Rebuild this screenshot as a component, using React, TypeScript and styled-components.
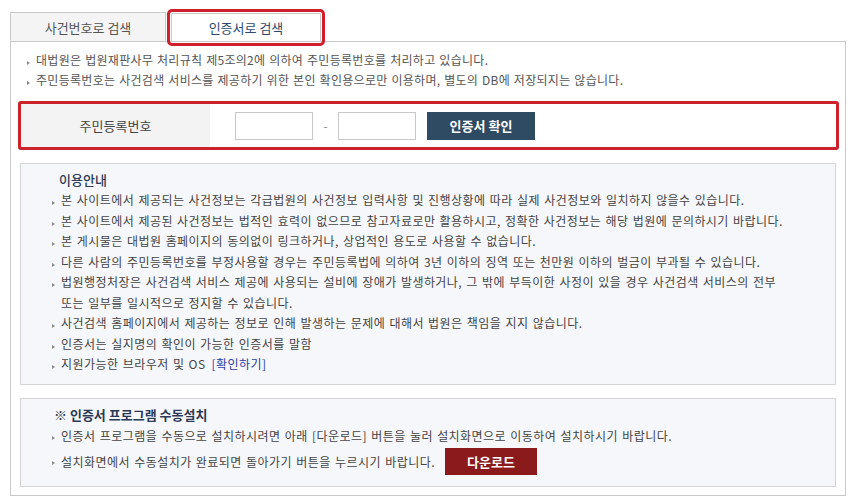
import React from "react";
import styled, { createGlobalStyle } from "styled-components";

const Global = createGlobalStyle`
  html, body { margin: 0; padding: 0; background: #fff; }
  body {
    font-family: "Noto Sans CJK KR", "Noto Sans", sans-serif;
    color: #444;
    font-size: 12px;
  }
  * { box-sizing: border-box; }
`;

const Page = styled.div`
  width: 846px;
  padding: 12px 0 0 10px;
`;

const TabBar = styled.div`
  display: flex;
  align-items: flex-end;
  height: 29px;
`;

const Tab = styled.div<{ $active?: boolean }>`
  position: relative;
  z-index: ${(p) => (p.$active ? 2 : 1)};
  width: ${(p) => (p.$active ? 150 : 156)}px;
  height: 29px;
  margin-left: ${(p) => (p.$active ? 5 : 0)}px;
  margin-bottom: ${(p) => (p.$active ? -1 : 0)}px;
  display: flex;
  align-items: center;
  justify-content: center;
  border: 1px solid #c9c9c9;
  border-bottom: ${(p) => (p.$active ? "1px solid #c9c9c9" : "none")};
  background: ${(p) => (p.$active ? "#fff" : "#f4f4f4")};
  color: ${(p) => (p.$active ? "#2d4a6e" : "#555")};
  font-size: 13px;
  outline: ${(p) => (p.$active ? "3px solid #cf1f2a" : "none")};
  outline-offset: 1px;
  border-radius: 1px;
`;

const Panel = styled.div`
  border: 1px solid #c9c9c9;
  padding: 8px 6px 8px 7px;
`;

const TopList = styled.ul`
  list-style: none;
  margin: 0;
  padding: 0 0 0 9px;
  color: #555;
  line-height: 20px;
  letter-spacing: 0.3px;
  word-spacing: 0.8px;
`;

const Item = styled.li<{ $hang?: boolean }>`
  display: flex;
  align-items: flex-start;
  margin-left: ${(p) => (p.$hang ? -7 : 0)}px;
`;

const Bullet = styled.span`
  flex: none;
  width: 0;
  height: 0;
  margin-top: 11px;
  margin-right: 6px;
  border-left: 3px solid #8a8a8a;
  border-top: 2.5px solid transparent;
  border-bottom: 2.5px solid transparent;
`;

const RedBox = styled.div`
  margin-top: 11px;
  border: 3px solid #cc222b;
  border-radius: 3px;
  height: 49px;
  display: flex;
`;

const Label = styled.div`
  width: 189px;
  background: #f3f3f3;
  display: flex;
  align-items: center;
  justify-content: center;
  font-size: 13px;
  color: #444;
`;

const InputRow = styled.div`
  display: flex;
  align-items: center;
  padding-left: 25px;
`;

const Field = styled.input`
  width: 78px;
  height: 28px;
  border: 1px solid #c8c8c8;
  background: #fff;
  padding: 0 4px;
  font: inherit;
`;

const Dash = styled.span`
  width: 25px;
  text-align: center;
  color: #888;
  font-size: 12px;
`;

const Button = styled.button<{ $tone: "navy" | "red" }>`
  flex: none;
  height: ${(p) => (p.$tone === "navy" ? 28 : 27)}px;
  width: ${(p) => (p.$tone === "navy" ? 108 : 92)}px;
  margin-left: ${(p) => (p.$tone === "navy" ? 11 : 10)}px;
  border: none;
  background: ${(p) => (p.$tone === "navy" ? "#2f4a63" : "#8b1a1c")};
  color: #fff;
  font-family: inherit;
  font-size: 13px;
  font-weight: 700;
  letter-spacing: 0;
  word-spacing: 0;
  padding: 0;
`;

const InfoBox = styled.div<{ $top: number }>`
  margin: ${(p) => p.$top}px 3px 0 2px;
  border: 1px solid #d4d4d4;
  background: #f6f7fa;
  padding: 6px 10px 9px 38px;
`;

const InfoTitle = styled.div<{ $bold?: boolean }>`
  font-size: 13px;
  line-height: 20px;
  color: #2b3a55;
  font-weight: ${(p) => (p.$bold ? 700 : 500)};
  margin-left: ${(p) => (p.$bold ? -5 : 0)}px;
`;

const InfoList = styled.ul<{ $lh: number }>`
  list-style: none;
  margin: 0;
  padding: 0;
  line-height: ${(p) => p.$lh}px;
  color: #444;
  letter-spacing: 0.45px;
  word-spacing: 1.1px;
`;

const DownloadItem = styled.li`
  display: flex;
  align-items: center;
  margin-left: -7px;
  height: 30px;
`;

const MidBullet = styled(Bullet)`
  margin-top: 2px;
`;

const Link = styled.a`
  color: #2a3da3;
  text-decoration: none;
  margin-left: 6px;
`;

const infoItems: React.ReactNode[] = [
  "본 사이트에서 제공되는 사건정보는 각급법원의 사건정보 입력사항 및 진행상황에 따라 실제 사건정보와 일치하지 않을수 있습니다.",
  "본 사이트에서 제공된 사건정보는 법적인 효력이 없으므로 참고자료로만 활용하시고, 정확한 사건정보는 해당 법원에 문의하시기 바랍니다.",
  "본 게시물은 대법원 홈페이지의 동의없이 링크하거나, 상업적인 용도로 사용할 수 없습니다.",
  "다른 사람의 주민등록번호를 부정사용할 경우는 주민등록법에 의하여 3년 이하의 징역 또는 천만원 이하의 벌금이 부과될 수 있습니다.",
  <>
    법원행정처장은 사건검색 서비스 제공에 사용되는 설비에 장애가 발생하거나, 그 밖에 부득이한 사정이 있을 경우 사건검색 서비스의 전부
    <br />
    또는 일부를 일시적으로 정지할 수 있습니다.
  </>,
  "사건검색 홈페이지에서 제공하는 정보로 인해 발생하는 문제에 대해서 법원은 책임을 지지 않습니다.",
  "인증서는 실지명의 확인이 가능한 인증서를 말함",
  <>
    지원가능한 브라우저 및 OS<Link href="#">[확인하기]</Link>
  </>,
];

export default function App() {
  return (
    <>
      <Global />
      <Page>
        <TabBar>
          <Tab>사건번호로 검색</Tab>
          <Tab $active>인증서로 검색</Tab>
        </TabBar>
        <Panel>
          <TopList>
            <Item>
              <Bullet />
              <span>대법원은 법원재판사무 처리규칙 제5조의2에 의하여 주민등록번호를 처리하고 있습니다.</span>
            </Item>
            <Item>
              <Bullet />
              <span>주민등록번호는 사건검색 서비스를 제공하기 위한 본인 확인용으로만 이용하며, 별도의 DB에 저장되지는 않습니다.</span>
            </Item>
          </TopList>

          <RedBox>
            <Label>주민등록번호</Label>
            <InputRow>
              <Field type="text" aria-label="주민등록번호 앞자리" />
              <Dash>-</Dash>
              <Field type="password" aria-label="주민등록번호 뒷자리" />
              <Button $tone="navy">인증서 확인</Button>
            </InputRow>
          </RedBox>

          <InfoBox $top={13}>
            <InfoTitle>이용안내</InfoTitle>
            <InfoList $lh={20.5}>
              {infoItems.map((t, i) => (
                <Item $hang key={i}>
                  <Bullet />
                  <span>{t}</span>
                </Item>
              ))}
            </InfoList>
          </InfoBox>

          <InfoBox $top={13}>
            <InfoTitle $bold>※ 인증서 프로그램 수동설치</InfoTitle>
            <InfoList $lh={22}>
              <Item $hang>
                <Bullet />
                <span>인증서 프로그램을 수동으로 설치하시려면 아래 [다운로드] 버튼을 눌러 설치화면으로 이동하여 설치하시기 바랍니다.</span>
              </Item>
              <DownloadItem>
                <MidBullet />
                <span>설치화면에서 수동설치가 완료되면 돌아가기 버튼을 누르시기 바랍니다.</span>
                <Button $tone="red">다운로드</Button>
              </DownloadItem>
            </InfoList>
          </InfoBox>
        </Panel>
      </Page>
    </>
  );
}
